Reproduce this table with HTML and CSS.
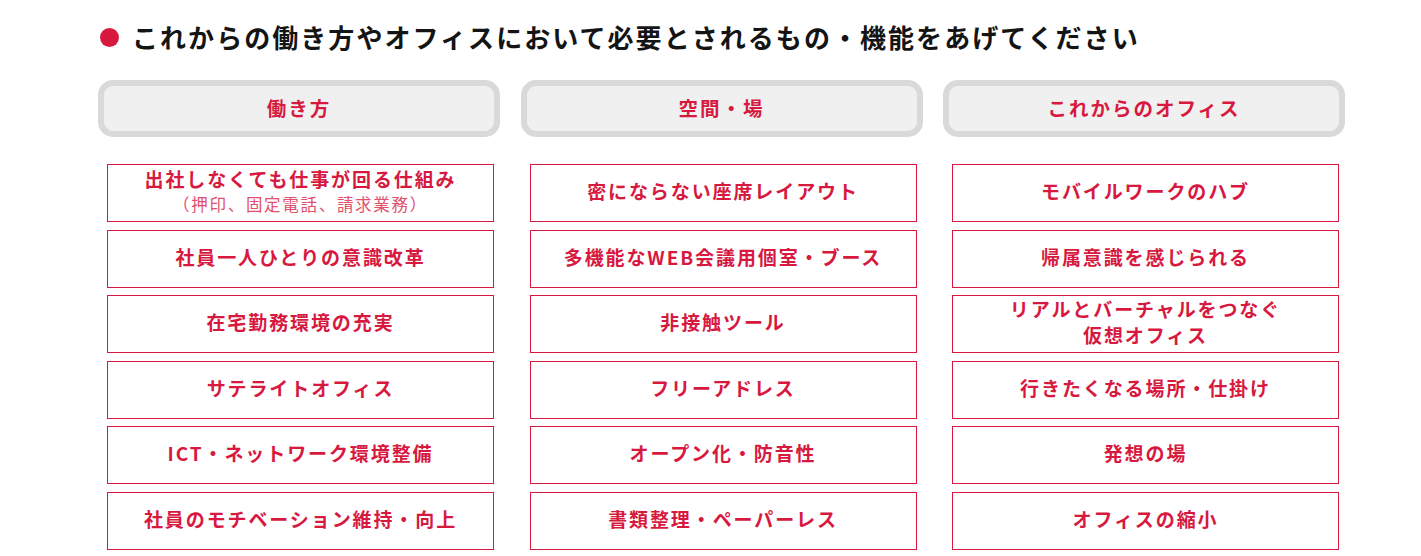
FILE: index.html
```html
<!DOCTYPE html>
<html lang="ja">
<head>
<meta charset="utf-8">
<link rel="stylesheet" href="styles.css">
</head>
<body>
<div class="page">
  <h2 class="title"><span class="dot"></span><span class="title-text">これからの働き方やオフィスにおいて必要とされるもの・機能をあげてください</span></h2>
  <div class="columns">
    <div class="col">
      <div class="head">働き方</div>
      <div class="card"><span>出社しなくても仕事が回る仕組み</span><span class="sub">（押印、固定電話、請求業務）</span></div>
      <div class="card">社員一人ひとりの意識改革</div>
      <div class="card">在宅勤務環境の充実</div>
      <div class="card">サテライトオフィス</div>
      <div class="card">ICT・ネットワーク環境整備</div>
      <div class="card">社員のモチベーション維持・向上</div>
    </div>
    <div class="col">
      <div class="head">空間・場</div>
      <div class="card">密にならない座席レイアウト</div>
      <div class="card">多機能なWEB会議用個室・ブース</div>
      <div class="card">非接触ツール</div>
      <div class="card">フリーアドレス</div>
      <div class="card">オープン化・防音性</div>
      <div class="card">書類整理・ペーパーレス</div>
    </div>
    <div class="col">
      <div class="head">これからのオフィス</div>
      <div class="card">モバイルワークのハブ</div>
      <div class="card">帰属意識を感じられる</div>
      <div class="card"><span>リアルとバーチャルをつなぐ</span><span>仮想オフィス</span></div>
      <div class="card">行きたくなる場所・仕掛け</div>
      <div class="card">発想の場</div>
      <div class="card">オフィスの縮小</div>
    </div>
  </div>
</div>
</body>
</html>
```

FILE: styles.css
```css
html, body {
  margin: 0;
  padding: 0;
  background: #ffffff;
}
body {
  font-family: "Noto Sans CJK JP", "Noto Sans", sans-serif;
  color: #111;
}
.page {
  padding: 19px 0 0 98px;
}
.title {
  margin: 0 0 25px 2px;
  display: flex;
  align-items: center;
  gap: 13px;
  font-size: 26px;
  font-weight: 700;
  line-height: 36px;
  letter-spacing: 2.05px;
  color: #141414;
}
.dot {
  width: 19px;
  height: 19px;
  border-radius: 50%;
  background: #d7193f;
  flex: none;
}
.columns {
  display: grid;
  grid-template-columns: repeat(3, 402px);
  column-gap: 20.5px;
}
.col {
  display: flex;
  flex-direction: column;
  gap: 7.6px;
}
.head {
  height: 57px;
  box-sizing: border-box;
  border: 6px solid #d9d9d9;
  border-radius: 15px;
  background: #f0f0f0;
  display: flex;
  align-items: center;
  justify-content: center;
  padding-bottom: 3px;
  font-size: 19.5px;
  font-weight: 700;
  letter-spacing: 2px;
  color: #d7193f;
  margin-bottom: 19.4px;
}
.card {
  margin-left: 9px;
  width: 387px;
  height: 58px;
  box-sizing: border-box;
  border: 1.5px solid #d7193f;
  display: flex;
  flex-direction: column;
  align-items: center;
  justify-content: center;
  padding-bottom: 4px;
  font-size: 19px;
  font-weight: 700;
  letter-spacing: 1.9px;
  line-height: 26px;
  color: #d7193f;
  text-align: center;
}
.card .sub {
  font-size: 16.5px;
  font-weight: 400;
  letter-spacing: 1.7px;
  line-height: 24px;
  color: #e0506d;
}
```
